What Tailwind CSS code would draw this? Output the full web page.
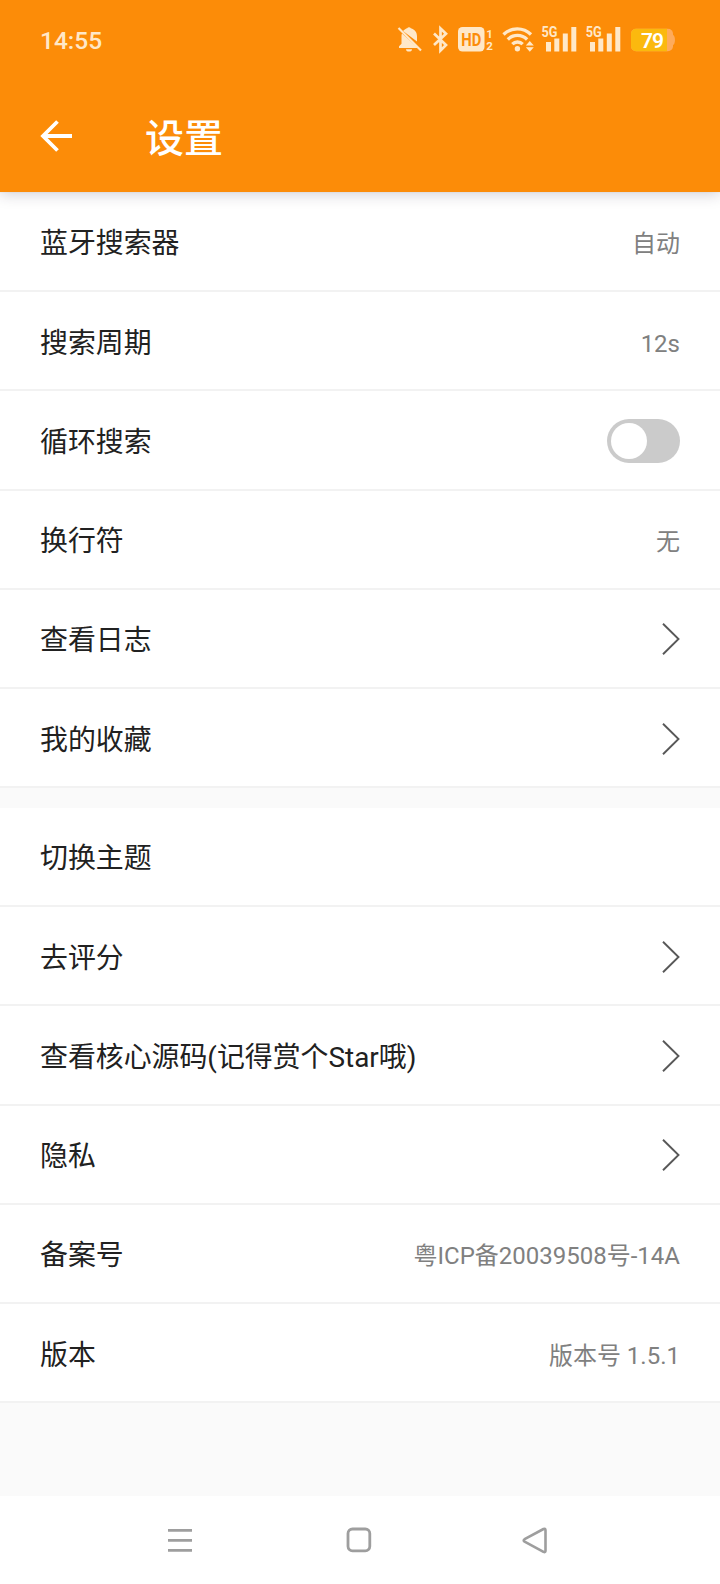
<!DOCTYPE html>
<html lang="zh-CN">
<head>
    <meta charset="UTF-8">
    <meta name="viewport" content="width=device-width, initial-scale=1.0">
    <title>设置</title>
    <script src="https://cdn.jsdelivr.net/npm/@tailwindcss/browser@4"></script>
</head>
<body class="bg-[#fafafa] font-[Roboto,'Noto_Sans_CJK_SC',sans-serif] text-[#212121]">
    <div class="flex flex-col h-[1584px] w-[720px] overflow-hidden">
        <header class="relative z-10 h-[192px] shrink-0 bg-[#fc8c08] text-white shadow-[0_2px_14px_rgba(40,30,60,0.22)]">
            <!-- Status bar -->
            <div class="flex h-20 items-center justify-between pl-10 pr-[45px] text-[#ffe8c8]">
                <span class="mt-0.5 text-[24.5px] font-medium">14:55</span>
                <svg class="h-[60px] w-[295px]" viewBox="380 10 295 60" fill="currentColor">
                    <!-- muted bell -->
                    <path d="M403 31c1.5-1.5 3-2.4 4.200-2.700a2 2 0 0 1 3.600 0c4 1 6.200 4.200 6.200 8.200v5L403 31Z"/>
                    <path d="M402 33.500 418 48H399v-1.800l2.500-2.500v-8c0-.8.2-1.500.5-2.200ZM406 49.300h6a3 2.300 0 0 1-6 0Z"/>
                    <path d="m398.500 28 22.500 22.500" fill="none" stroke="currentColor" stroke-width="2.200"/>
                    <!-- bluetooth -->
                    <path d="m434 33.500 12 11.500-5.500 5.500v-22l5.500 5.300L434 45" fill="none" stroke="currentColor" stroke-width="2.700"/>
                    <!-- HD -->
                    <rect x="458" y="27" width="26.500" height="24.500" rx="4.500"/>
                    <text x="471.300" y="45.500" text-anchor="middle" textLength="20" lengthAdjust="spacingAndGlyphs" font-size="17.500" font-weight="700" fill="#fc8c08">HD</text>
                    <text x="486.300" y="37.500" font-size="11.500" font-weight="700">1</text>
                    <text x="486.300" y="49.800" font-size="11.500" font-weight="700">2</text>
                    <!-- wifi -->
                    <g fill="none" stroke="currentColor" stroke-width="3.300">
                        <path d="M503.500 34.500a19.500 19.500 0 0 1 27.500 0"/>
                        <path d="M507.800 39.500a13.500 13.500 0 0 1 19.300 0"/>
                        <path d="M512.300 44.200a7.300 7.300 0 0 1 10.400 0"/>
                    </g>
                    <circle cx="517.400" cy="48.800" r="2.700"/>
                    <path d="m525.800 45.500 4-4.500 4 4.500ZM525.800 47.300l4 4.500 4-4.500Z"/>
                    <!-- signal 1 -->
                    <text x="541.500" y="37" textLength="16" lengthAdjust="spacingAndGlyphs" font-size="14.500" font-weight="700">5G</text>
                    <path d="M546 42h5v9.500h-5zM554.300 38.500h5v13h-5zM562.800 33.500h5v18h-5zM571.300 27h5v24.500h-5z"/>
                    <!-- signal 2 -->
                    <text x="585.700" y="37" textLength="16" lengthAdjust="spacingAndGlyphs" font-size="14.500" font-weight="700">5G</text>
                    <path d="M590 42h5v9.500h-5zM598.300 38.500h5v13h-5zM606.800 33.500h5v18h-5zM615.300 27h5v24.500h-5z"/>
                    <!-- battery -->
                    <path d="M672.500 34.500c3.300 1 3.300 9.800 0 10.800Z" fill="#feab5b"/>
                    <rect x="631" y="28.800" width="42" height="22.500" rx="5" fill="#feab5b"/>
                    <path d="M667 28.800v22.500H636a5 5 0 0 1-5-5V33.800a5 5 0 0 1 5-5Z" fill="#fbb90e"/>
                    <text x="652.500" y="47.500" text-anchor="middle" textLength="23" font-size="21" font-weight="600" fill="#fff">79</text>
                </svg>
            </div>
            <!-- Toolbar -->
            <div class="flex h-28 items-center pl-10">
                <svg class="h-8 w-8" viewBox="0 0 32 32" fill="none" stroke="currentColor" stroke-width="3.800">
                    <path d="M32 16H3M17.500 1.500 3 16l14.500 14.500"/>
                </svg>
                <h1 class="ml-[73px] mt-1.5 text-[39px] font-medium leading-none">设置</h1>
            </div>
        </header>

        <main class="flex flex-col gap-[19.5px] pt-[0.75px]">
            <section id="group-main" class="bg-white"></section>
            <section id="group-about" class="bg-white"></section>
        </main>

        <!-- Navigation bar -->
        <nav class="mt-auto flex h-[88.5px] shrink-0 items-center bg-white pl-[168px] pt-px text-[#9e9e9e]">
            <svg class="h-6 w-6" viewBox="0 0 24 24" fill="none" stroke="currentColor" stroke-width="2.800">
                <path d="M0 2.400h24M0 12.400h24M0 22.400h24"/>
            </svg>
            <svg class="ml-[154px] h-[26px] w-[26px]" viewBox="0 0 26 26" fill="none" stroke="currentColor" stroke-width="2.800">
                <rect x="2" y="2" width="21.800" height="21.800" rx="4.500"/>
            </svg>
            <svg class="ml-[150px] h-[27px] w-[26px]" viewBox="0 0 26 27" fill="none" stroke="currentColor" stroke-width="2.600" stroke-linejoin="round">
                <path d="M2.600 12.200 21.500 2q2-.8 2 1.200v20.500q0 2-2 1.200L2.600 14.700q-1.800-1.200 0-2.500Z"/>
            </svg>
        </nav>
    </div>

    <script>
        const groups = {
            'group-main': [
                { label: '蓝牙搜索器', value: '自动' },
                { label: '搜索周期', value: '12s' },
                { label: '循环搜索', type: 'switch' },
                { label: '换行符', value: '无' },
                { label: '查看日志', type: 'link' },
                { label: '我的收藏', type: 'link' }
            ],
            'group-about': [
                { label: '切换主题' },
                { label: '去评分', type: 'link' },
                { label: '查看核心源码(记得赏个Star哦)', type: 'link' },
                { label: '隐私', type: 'link' },
                { label: '备案号', value: '粤ICP备20039508号-14A' },
                { label: '版本', value: '版本号 1.5.1' }
            ]
        };

        const chevron = '<svg class="mt-0.5 h-8 w-[18px]" viewBox="0 0 18 32" fill="none" stroke="#585858" stroke-width="1.900"><path d="M1 .7 16.500 16 1 31.300"/></svg>';
        const toggle = '<div class="mt-0.5 flex h-11 w-[73px] items-center rounded-full bg-[#cbcbcb] pl-1"><div class="h-9 w-9 rounded-full bg-white"></div></div>';

        function control(item) {
            if (item.type === 'link') return chevron;
            if (item.type === 'switch') return toggle;
            return item.value ? `<span class="mt-1.5 text-[24px] leading-none text-[#808080]">${item.value}</span>` : '';
        }

        Object.keys(groups).forEach(id => {
            document.getElementById(id).innerHTML = groups[id].map(item => `
                <div class="flex h-[99.25px] items-center justify-between border-b-2 border-[#f2f2f2] px-10">
                    <span class="mt-1.5 text-[27.9px] leading-none">${item.label}</span>
                    ${control(item)}
                </div>`).join('');
        });
    </script>
</body>
</html>
